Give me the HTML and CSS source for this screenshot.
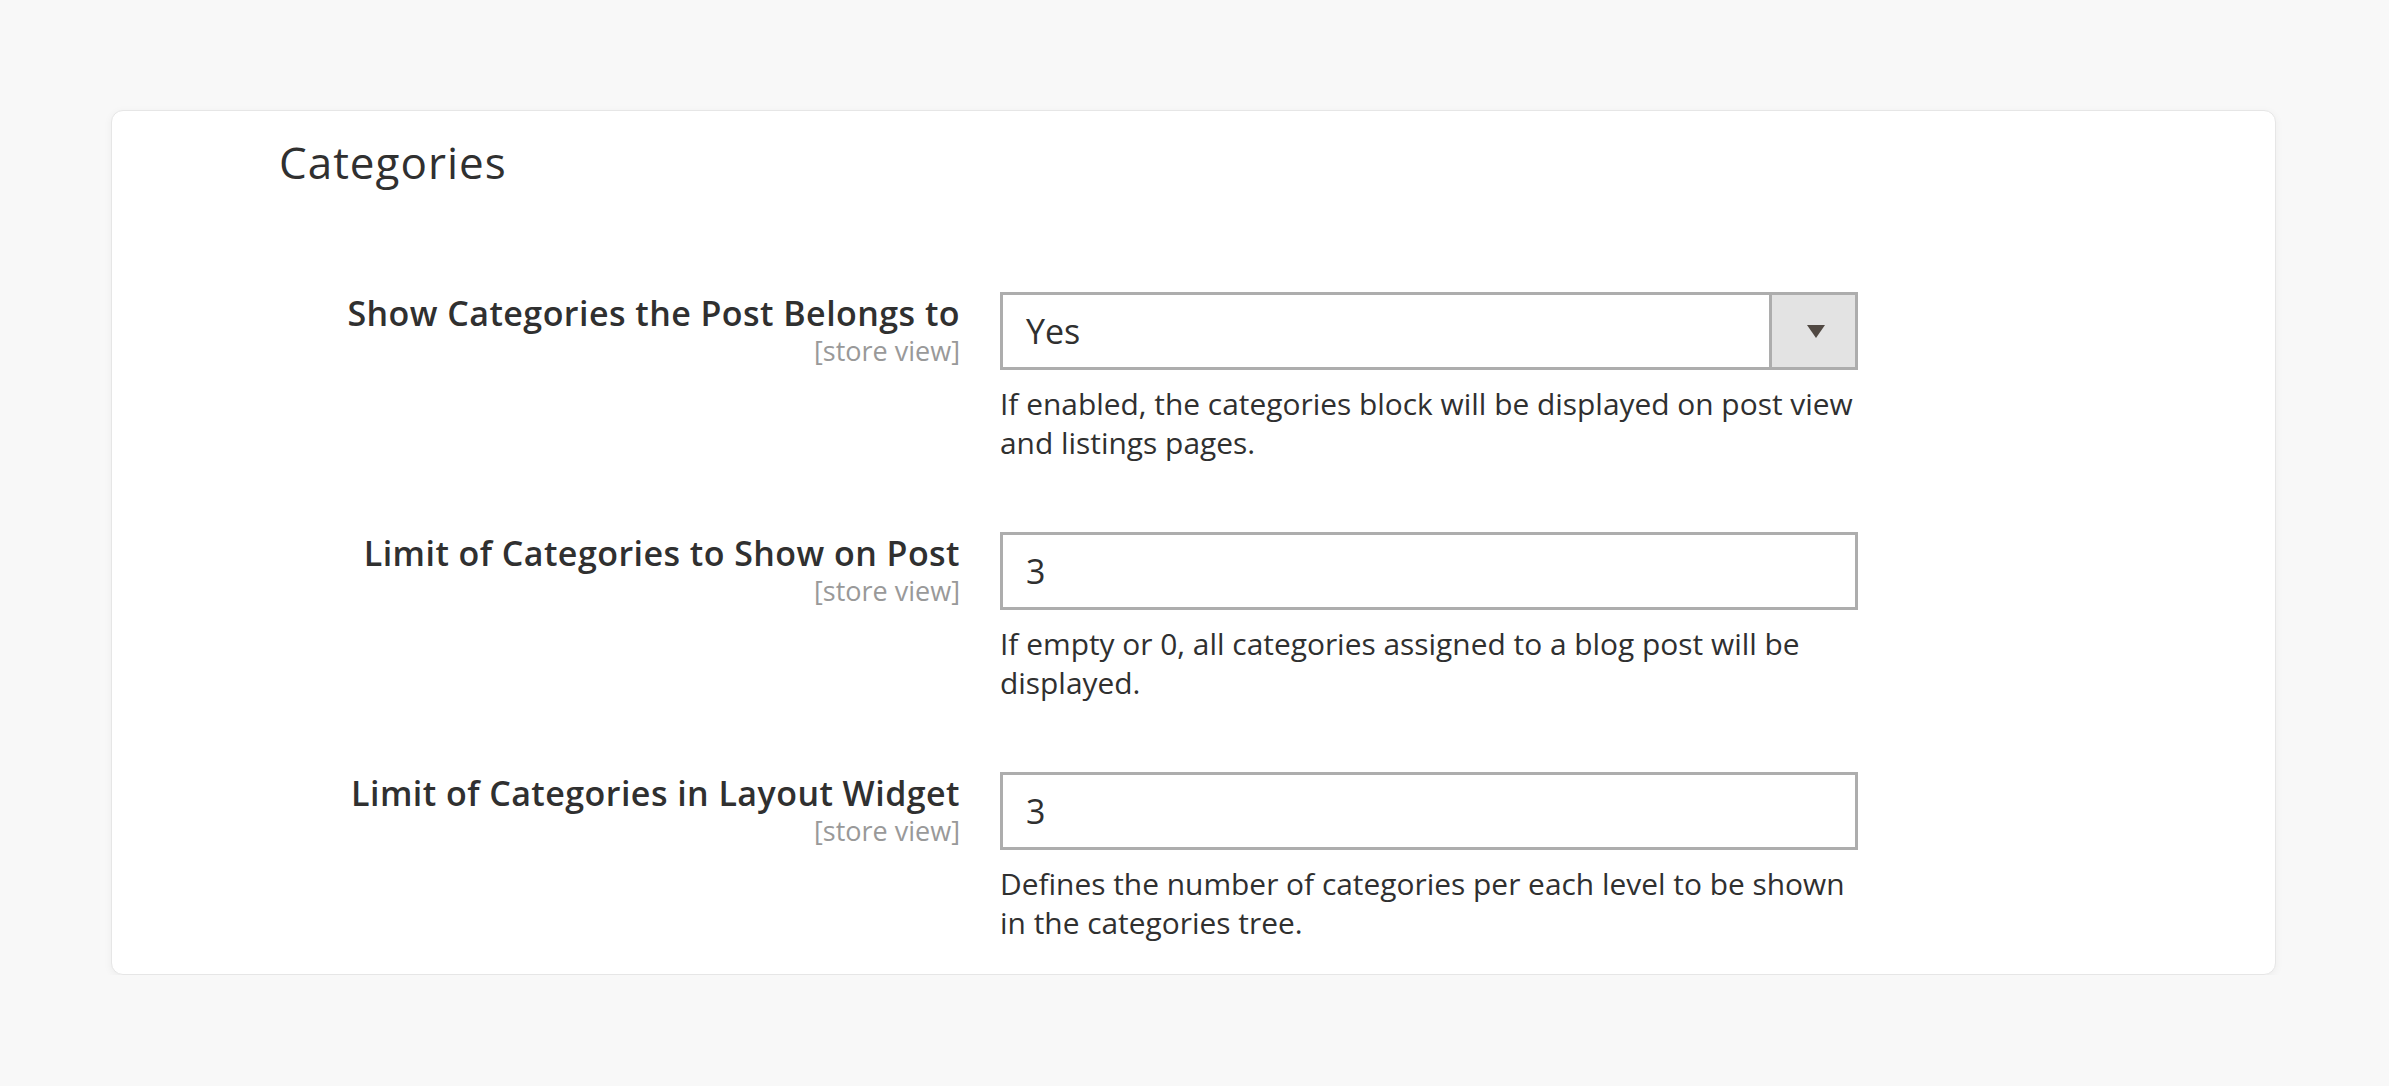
FILE: index.html
```html
<!DOCTYPE html>
<html lang="en">
<head>
<meta charset="utf-8">
<title>Categories</title>
<link rel="stylesheet" href="styles.css">
</head>
<body>
<div class="page">
  <section class="card">
    <h2 class="card-title">Categories</h2>
    <div class="rows">
      <div class="row">
        <div class="label">
          <span class="label-text">Show Categories the Post Belongs to</span>
          <span class="scope">[store view]</span>
        </div>
        <div class="field">
          <div class="select">
            <span class="select-value">Yes</span>
            <span class="select-btn"><span class="arrow"></span></span>
          </div>
          <p class="note">If enabled, the categories block will be displayed on post view and listings pages.</p>
        </div>
      </div>
      <div class="row">
        <div class="label">
          <span class="label-text">Limit of Categories to Show on Post</span>
          <span class="scope">[store view]</span>
        </div>
        <div class="field">
          <div class="input">3</div>
          <p class="note">If empty or 0, all categories assigned to a blog post will be displayed.</p>
        </div>
      </div>
      <div class="row">
        <div class="label">
          <span class="label-text">Limit of Categories in Layout Widget</span>
          <span class="scope">[store view]</span>
        </div>
        <div class="field">
          <div class="input">3</div>
          <p class="note">Defines the number of categories per each level to be shown in the categories tree.</p>
        </div>
      </div>
    </div>
  </section>
</div>
</body>
</html>
```
FILE: styles.css
```css
html, body {
  margin: 0;
  padding: 0;
  background: #f8f8f8;
}
body {
  font-family: "Open Sans", "Liberation Sans", sans-serif;
  color: #303030;
}
.page {
  padding: 110px 0 0 111px;
}
.card {
  box-sizing: border-box;
  width: 2165px;
  height: 865px;
  background: #ffffff;
  border: 1px solid #e6e6e6;
  border-radius: 12px;
  box-shadow: 0 2px 8px rgba(0, 0, 0, 0.05);
  padding: 25px 0 0 167px;
}
.card-title {
  margin: 0;
  font-size: 44px;
  line-height: 52px;
  font-weight: 500;
  letter-spacing: 1px;
  color: #303030;
}
.rows {
  display: flex;
  flex-direction: column;
  gap: 70px;
  margin-top: 104px;
}
.row {
  display: flex;
  align-items: flex-start;
  gap: 40px;
}
.label {
  width: 681px;
  display: flex;
  flex-direction: column;
  align-items: flex-end;
  text-align: right;
  padding-top: 1px;
}
.label-text {
  font-size: 34px;
  line-height: 40px;
  font-weight: 600;
  letter-spacing: 0.45px;
  color: #303030;
}
.scope {
  font-size: 27px;
  line-height: 35px;
  color: #999999;
}
.field {
  width: 858px;
}
.select,
.input {
  box-sizing: border-box;
  height: 78px;
  border: 3px solid #adadad;
  background: #ffffff;
  font-size: 34px;
  color: #303030;
}
.select {
  display: flex;
  align-items: stretch;
}
.select-value {
  flex: 1;
  display: flex;
  align-items: center;
  padding-left: 23px;
}
.select-btn {
  width: 83px;
  border-left: 3px solid #adadad;
  background: #e3e3e3;
  display: flex;
  align-items: center;
  justify-content: center;
}
.arrow {
  width: 0;
  height: 0;
  border-left: 9px solid transparent;
  border-right: 9px solid transparent;
  border-top: 13px solid #514943;
  margin-left: 4px;
}
.input {
  display: flex;
  align-items: center;
  padding-left: 23px;
}
.note {
  margin: 14px 0 0 0;
  font-size: 29.9px;
  line-height: 39px;
  color: #303030;
}
```
